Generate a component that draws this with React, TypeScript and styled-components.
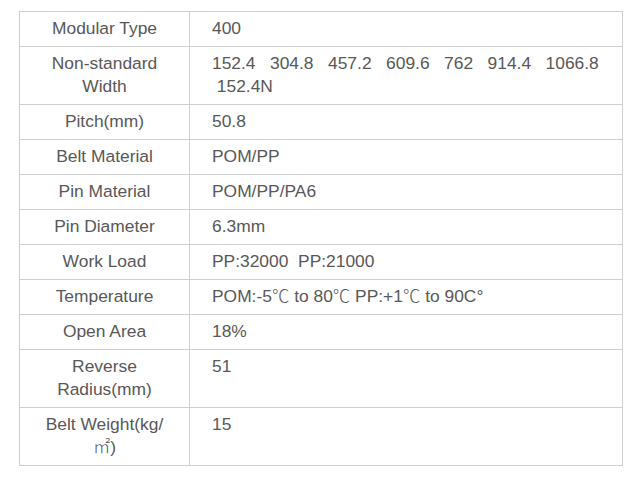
import React from "react";
import styled, { createGlobalStyle } from "styled-components";

const Global = createGlobalStyle`
  html, body { margin: 0; padding: 0; background: #fff; }
  body { font-family: "Liberation Sans", Arial, sans-serif; }
`;

const Page = styled.div`
  padding: 11px 0 0 19px;
`;

const Table = styled.table`
  border-collapse: collapse;
  width: 604px;
  font-family: "Liberation Sans", Arial, sans-serif;
  font-size: 17.4px;
  line-height: 23px;
  color: #585858;
`;

const Label = styled.td`
  width: 147px;
  border: 1px solid #cfcfcf;
  padding: 5px 11px 6px;
  text-align: center;
  vertical-align: middle;
  white-space: nowrap;
`;

const Value = styled.td`
  border: 1px solid #cfcfcf;
  padding: 5px 10px 6px 22px;
  text-align: left;
  vertical-align: top;
  white-space: nowrap;
`;

const Sym = styled.span`
  font-family: "Noto Sans CJK SC", sans-serif;
  font-weight: 300;
  line-height: 0;
`;

const sp3 = "\u00a0\u00a0 ";
const C = () => <Sym>{"\u2103"}</Sym>;

const rows: [React.ReactNode, React.ReactNode][] = [
  ["Modular Type", "400"],
  [
    <>Non-standard<br />Width</>,
    <>
      {["152.4", "304.8", "457.2", "609.6", "762", "914.4", "1066.8"].join(sp3)}
      <br />
      {"\u00a0152.4N"}
    </>,
  ],
  ["Pitch(mm)", "50.8"],
  ["Belt Material", "POM/PP"],
  ["Pin Material", "POM/PP/PA6"],
  ["Pin Diameter", "6.3mm"],
  ["Work Load", "PP:32000\u00a0 PP:21000"],
  ["Temperature", <>POM:-5<C /> to 80<C /> PP:+1<C /> to 90C°</>],
  ["Open Area", "18%"],
  [<>Reverse<br />Radius(mm)</>, "51"],
  [<>Belt Weight(kg/<br /><Sym>㎡</Sym>)</>, "15"],
];

export default function App() {
  return (
    <Page>
      <Global />
      <Table>
        <tbody>
          {rows.map(([l, v], i) => (
            <tr key={i}>
              <Label>{l}</Label>
              <Value>{v}</Value>
            </tr>
          ))}
        </tbody>
      </Table>
    </Page>
  );
}
